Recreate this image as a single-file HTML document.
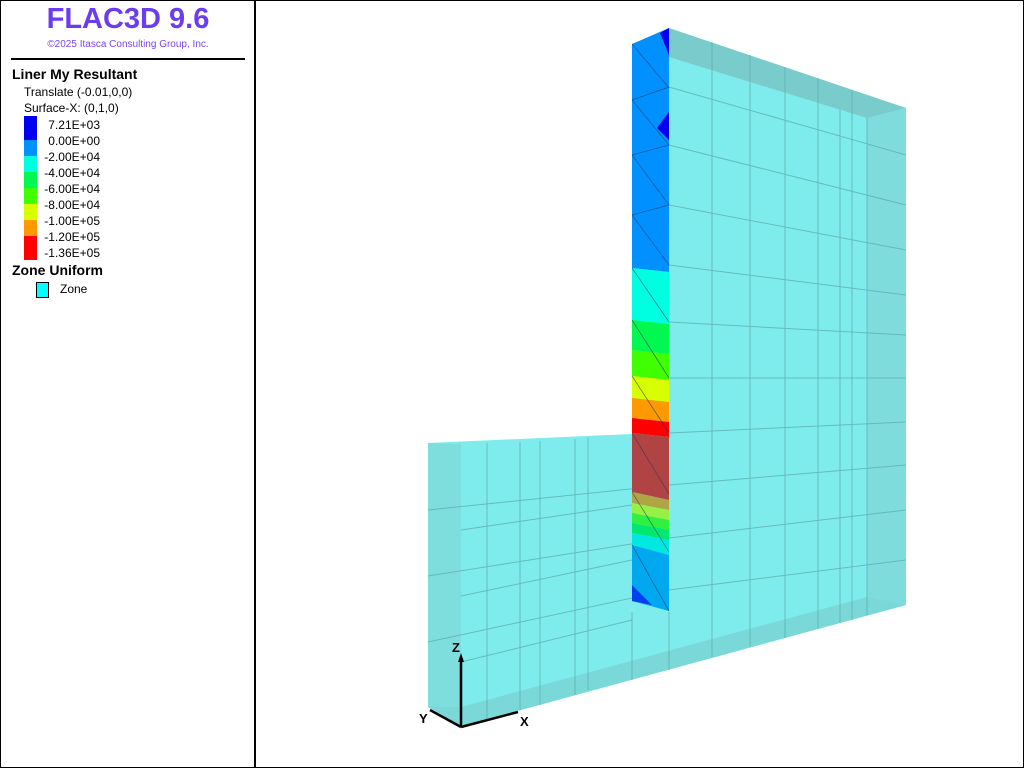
<!DOCTYPE html>
<html><head><meta charset="utf-8"><style>
html,body{margin:0;padding:0;width:1024px;height:768px;overflow:hidden;background:#fff;font-family:"Liberation Sans","DejaVu Sans",sans-serif}
#frame{position:absolute;left:0;top:0;width:1022px;height:766px;border:1px solid #000}
#side{position:absolute;left:0;top:0;width:256px;height:768px;border-right:2px solid #000;box-sizing:border-box}
.t{position:absolute;white-space:nowrap}
</style></head><body>
<div id="frame"></div>
<div id="side">
<div class="t" style="left:0;width:256px;text-align:center;top:3px;font-size:29px;font-weight:bold;color:#6a3cf2">FLAC3D 9.6</div>
<div class="t" style="left:0;width:256px;text-align:center;top:39px;font-size:10px;color:#7a44f0">©2025 Itasca Consulting Group, Inc.</div>
<div style="position:absolute;left:11px;top:58px;width:234px;height:2px;background:#000"></div>
<div class="t" style="left:12px;top:66px;font-size:14px;font-weight:bold">Liner My Resultant</div>
<div class="t" style="left:24px;top:85px;font-size:12px">Translate (-0.01,0,0)</div>
<div class="t" style="left:24px;top:101px;font-size:12px">Surface-X: (0,1,0)</div>
<div style="position:absolute;left:24px;top:116px;width:13px">
<div style="height:24px;background:#0000f0"></div>
<div style="height:16px;background:#0090ff"></div>
<div style="height:16px;background:#00ffe0"></div>
<div style="height:16px;background:#00f850"></div>
<div style="height:16px;background:#40ff00"></div>
<div style="height:16px;background:#d8ff00"></div>
<div style="height:16px;background:#ff9900"></div>
<div style="height:24px;background:#ff0000"></div>
</div>
<div style="position:absolute;left:40px;top:117px;width:60px;text-align:right;font-size:12px;line-height:16px">7.21E+03<br>0.00E+00<br>-2.00E+04<br>-4.00E+04<br>-6.00E+04<br>-8.00E+04<br>-1.00E+05<br>-1.20E+05<br>-1.36E+05</div>
<div class="t" style="left:12px;top:262px;font-size:14px;font-weight:bold">Zone Uniform</div>
<div style="position:absolute;left:36px;top:282px;width:11px;height:14px;background:#00ffff;border:1px solid #000"></div>
<div class="t" style="left:60px;top:282px;font-size:12px">Zone</div>
</div>
<svg style="position:absolute;left:0;top:0" width="1024" height="768">
<polygon points="428,443 632,434 632,44 669,28 906,108 906,605 462,726 428,707" fill="#7eecec"/>
<polygon points="428,443 461,444 461,726 428,707" fill="#7edede"/>
<polygon points="867,118 906,108 906,605 867,615" fill="#7edcdc"/>
<polygon points="669,28 906,108 867,118 669,57" fill="#7acccc"/>
<polygon points="462,726 906,605 867,597 461,707 428,707" fill="#7ad8d8"/>
<g stroke="#5fb0b0" stroke-width="1" fill="none" opacity="0.8">
<line x1="712" y1="70" x2="712" y2="657"/><line x1="750" y1="82" x2="750" y2="647"/><line x1="785" y1="93" x2="785" y2="638"/><line x1="818" y1="103" x2="818" y2="629"/><line x1="840" y1="110" x2="840" y2="623"/><line x1="852" y1="113" x2="852" y2="620"/><line x1="867" y1="118" x2="867" y2="615"/>
<line x1="712" y1="42" x2="712" y2="70"/><line x1="750" y1="55" x2="750" y2="82"/><line x1="785" y1="67" x2="785" y2="93"/><line x1="818" y1="78" x2="818" y2="103"/><line x1="852" y1="90" x2="852" y2="113"/>
<line x1="487" y1="443" x2="487" y2="720"/><line x1="520" y1="442" x2="520" y2="710"/><line x1="540" y1="441" x2="540" y2="705"/><line x1="575" y1="439" x2="575" y2="695"/><line x1="588" y1="438" x2="588" y2="690"/><line x1="632" y1="612" x2="632" y2="680"/><line x1="669" y1="612" x2="669" y2="670"/>
<line x1="669" y1="87" x2="906" y2="155"/><line x1="669" y1="145" x2="906" y2="205"/><line x1="669" y1="205" x2="906" y2="250"/><line x1="669" y1="265" x2="906" y2="295"/><line x1="669" y1="322" x2="906" y2="335"/><line x1="669" y1="378" x2="906" y2="378"/><line x1="669" y1="433" x2="906" y2="422"/><line x1="669" y1="485" x2="906" y2="465"/><line x1="669" y1="538" x2="906" y2="510"/><line x1="669" y1="590" x2="906" y2="560"/>
<line x1="428" y1="510" x2="669" y2="485"/><line x1="428" y1="576" x2="669" y2="538"/><line x1="428" y1="642" x2="669" y2="590"/>
<line x1="461" y1="530" x2="632" y2="505"/><line x1="461" y1="596" x2="632" y2="560"/><line x1="461" y1="662" x2="632" y2="620"/>
</g>
<polygon points="632,44 669,28 669,272 632,268" fill="#0090ff"/>
<polygon points="660,33 669,28 669,55" fill="#0000f0"/>
<polygon points="657,128 669,112 669,140" fill="#0000f0"/>
<polygon points="632,268 669,272 669,324 632,320" fill="#00ffe0"/>
<polygon points="632,320 669,324 669,354 632,350" fill="#00f850"/>
<polygon points="632,350 669,354 669,380 632,376" fill="#40ff00"/>
<polygon points="632,376 669,380 669,402 632,398" fill="#d8ff00"/>
<polygon points="632,398 669,402 669,422 632,418" fill="#ff9900"/>
<polygon points="632,418 669,422 669,437 632,433" fill="#ff0000"/>
<polygon points="632,433 669,437 669,500 632,492" fill="#b04444"/>
<polygon points="632,492 669,500 669,510 632,503" fill="#b0a444"/>
<polygon points="632,503 669,510 669,520 632,513" fill="#98f044"/>
<polygon points="632,513 669,520 669,530 632,523" fill="#30f040"/>
<polygon points="632,523 669,530 669,540 632,533" fill="#00e870"/>
<polygon points="632,533 669,540 669,555 632,545" fill="#00e8e0"/>
<polygon points="632,545 669,555 669,611 632,601" fill="#00a8f0"/>
<polygon points="632,585 652,605 632,601" fill="#0040f0"/>
<g stroke="#1a3a5a" stroke-width="0.7" fill="none" opacity="0.7">
<line x1="632" y1="44" x2="669" y2="88"/><line x1="632" y1="100" x2="669" y2="87"/><line x1="632" y1="100" x2="669" y2="145"/><line x1="632" y1="155" x2="669" y2="145"/><line x1="632" y1="155" x2="669" y2="205"/><line x1="632" y1="215" x2="669" y2="205"/><line x1="632" y1="215" x2="669" y2="265"/><line x1="632" y1="268" x2="669" y2="322"/><line x1="632" y1="320" x2="669" y2="378"/><line x1="632" y1="376" x2="669" y2="433"/><line x1="632" y1="433" x2="669" y2="494"/><line x1="632" y1="492" x2="669" y2="552"/><line x1="632" y1="545" x2="669" y2="611"/>
</g>
<g stroke="#000" stroke-width="2.5" fill="none">
<line x1="461" y1="727" x2="461" y2="660"/><line x1="461" y1="727" x2="518" y2="712"/><line x1="461" y1="727" x2="430" y2="710"/>
</g>
<polygon points="458,662 461,653 464,662" fill="#000"/>
<text x="452" y="652" font-size="13" font-weight="bold" font-family="Liberation Sans,sans-serif">Z</text>
<text x="520" y="726" font-size="13" font-weight="bold" font-family="Liberation Sans,sans-serif">X</text>
<text x="419" y="723" font-size="13" font-weight="bold" font-family="Liberation Sans,sans-serif">Y</text>
</svg>
</body></html>
